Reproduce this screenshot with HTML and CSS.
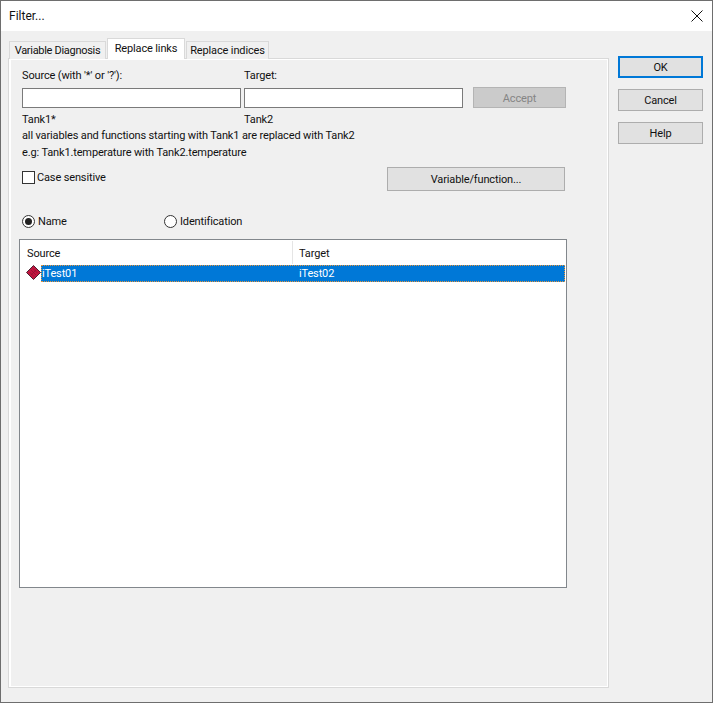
FILE: index.html

```html
<html>
<head>
  <meta charset="UTF-8">
  <title>Filter...</title>
  <link rel="stylesheet" href="styles.css">
</head>
<body>
<div class="window">
  <div class="titlebar">
    <span>Filter...</span>
    <svg class="close" width="12" height="12" viewBox="0 0 12 12"><path d="M0.5 0.5L11.5 11.5M11.5 0.5L0.5 11.5" stroke="#111" stroke-width="1" fill="none"/></svg>
  </div>
  <div class="content">
    <div class="left">
      <div class="tabs">
        <div class="tab tab-var">Variable Diagnosis</div>
        <div class="tab active">Replace links</div>
        <div class="tab tab-ind">Replace indices</div>
      </div>
      <div class="panel">
        <div class="fields">
          <div class="col-source">
            <div class="caption">Source (with '*' or '?'):</div>
            <div class="input"></div>
            <div class="hint">Tank1*</div>
          </div>
          <div class="col-target">
            <div class="caption">Target:</div>
            <div class="input"></div>
            <div class="hint">Tank2</div>
          </div>
          <button class="btn accept">Accept</button>
        </div>
        <div class="note">all variables and functions starting with Tank1 are replaced with Tank2</div>
        <div class="note">e.g: Tank1.temperature with Tank2.temperature</div>
        <div class="case-row">
          <label class="check"><span class="box"></span>Case sensitive</label>
          <button class="btn varfunc">Variable/function...</button>
        </div>
        <div class="radio-row">
          <label class="radio name-radio"><span class="dot on"></span>Name</label>
          <label class="radio"><span class="dot"></span>Identification</label>
        </div>
        <div class="list">
          <div class="list-head">
            <div class="head-source">Source</div>
            <div class="head-target">Target</div>
          </div>
          <div class="list-row">
            <svg class="diamond" width="15" height="15" viewBox="0 0 15 15">
              <path d="M7.5 0.5L14.5 7.5L7.5 14.5L0.5 7.5Z" fill="#c2163f" stroke="#4a2433" stroke-width="1"/>
              <path d="M5 5L10 10M7 3.5L11.5 8M3.5 7L8 11.5M10 5L5 10" fill="none" stroke="#8a1232" stroke-width="0.7"/>
            </svg>
            <div class="row-sel">
              <div class="cell-source">iTest01</div>
              <div class="cell-target">iTest02</div>
            </div>
          </div>
        </div>
      </div>
    </div>
    <div class="actions">
      <button class="btn side default">OK</button>
      <button class="btn side">Cancel</button>
      <button class="btn side">Help</button>
    </div>
  </div>
</div>
</body>
</html>
```

FILE: styles.css

```css
html, body {
  margin: 0;
  padding: 0;
}
body {
  width: 713px;
  height: 703px;
  overflow: hidden;
  background: #f0f0f0;
  font-family: Roboto, "Liberation Sans", sans-serif;
  font-size: 11px;
  letter-spacing: -0.14px;
  color: #111;
}
.window {
  box-sizing: border-box;
  width: 713px;
  height: 703px;
  border: 1px solid #6e6e6e;
  background: #f0f0f0;
}
.titlebar {
  height: 30px;
  background: #fff;
  display: flex;
  align-items: center;
  justify-content: space-between;
  padding: 0 9px 0 8px;
  font-size: 12px;
  letter-spacing: 0;
}
.content {
  display: flex;
  padding: 7px 9px 0 7px;
}
.left {
  width: 601px;
}
.tabs {
  display: flex;
  height: 21px;
  align-items: flex-end;
  padding-left: 1px;
  position: relative;
  z-index: 1;
  margin-bottom: -1px;
}
.tab {
  box-sizing: border-box;
  height: 18px;
  line-height: 17px;
  margin-right: 1px;
  border: 1px solid #d9d9d9;
  border-bottom: none;
  background: #f0f0f0;
  text-align: center;
  white-space: nowrap;
}
.tab-var {
  width: 97px;
  letter-spacing: -0.3px;
}
.tab-ind {
  width: 83px;
}
.tab.active {
  width: 78px;
  height: 21px;
  line-height: 20px;
  background: #fff;
  padding-bottom: 1px;
}
.panel {
  box-sizing: border-box;
  width: 601px;
  height: 630px;
  border: 1px solid #d9d9d9;
  box-shadow: inset 2px 1px 0 #fff, inset -1px -1px 0 #fff;
  padding: 8px 0 0 13px;
}
.fields {
  display: flex;
  align-items: flex-start;
}
.col-source {
  width: 222px;
}
.col-target {
  width: 229px;
}
.caption {
  height: 21px;
  line-height: 17px;
}
.input {
  box-sizing: border-box;
  width: 219px;
  height: 20px;
  background: #fff;
  border: 1px solid #7a7a7a;
}
.hint {
  height: 20px;
  line-height: 23px;
}
.btn {
  box-sizing: border-box;
  display: block;
  font-family: inherit;
  font-size: 11px;
  letter-spacing: -0.14px;
  color: #111;
  background: #e1e1e1;
  border: 1px solid #adadad;
  padding: 0;
  margin: 0;
}
.accept {
  width: 93px;
  height: 21px;
  margin-top: 20px;
  padding-top: 2px;
  background: #cbcbcb;
  border-color: #b4b4b4;
  color: #858585;
}
.note {
  height: 17px;
  line-height: 15px;
}
.case-row {
  display: flex;
  justify-content: space-between;
  align-items: flex-start;
  width: 543px;
  height: 24px;
  margin-top: 5px;
}
.check, .radio {
  display: flex;
  align-items: center;
}
.check {
  margin-top: 4px;
}
.box {
  box-sizing: border-box;
  width: 13px;
  height: 13px;
  margin-right: 2px;
  background: #fff;
  border: 1px solid #333;
}
.varfunc {
  width: 178px;
  height: 24px;
}
.radio-row {
  display: flex;
  height: 14px;
  margin-top: 23px;
}
.name-radio {
  width: 142px;
}
.dot {
  box-sizing: border-box;
  width: 13px;
  height: 13px;
  margin-right: 3px;
  border: 1px solid #333;
  border-radius: 50%;
  background: #fff;
  display: flex;
  align-items: center;
  justify-content: center;
}
.dot.on::after {
  content: "";
  width: 7px;
  height: 7px;
  border-radius: 50%;
  background: #222;
}
.list {
  box-sizing: border-box;
  width: 548px;
  height: 349px;
  margin: 11px 0 0 -3px;
  background: #fff;
  border: 1px solid #82878c;
}
.list-head {
  display: flex;
  height: 25px;
  line-height: 28px;
}
.head-source {
  box-sizing: border-box;
  width: 273px;
  padding-left: 7px;
  margin-top: 1px;
  height: 23px;
  line-height: 26px;
  border-right: 1px solid #e5e5e5;
}
.head-target {
  padding-left: 6px;
}
.list-row {
  display: flex;
  height: 17px;
  padding-left: 6px;
}
.diamond {
  flex: none;
}
.row-sel {
  display: flex;
  flex: 1;
  margin-right: 1px;
  background: #0078d7;
  color: #fff;
  line-height: 17px;
  outline: 1px dotted #e8953a;
  outline-offset: -1px;
}
.cell-source {
  width: 257px;
  padding-left: 1px;
}
.actions {
  width: 85px;
  margin-left: 9px;
  padding-top: 18px;
  display: flex;
  flex-direction: column;
  gap: 11px;
}
.side {
  width: 85px;
  height: 22px;
}
.default {
  border: 2px solid #0078d7;
}
```
